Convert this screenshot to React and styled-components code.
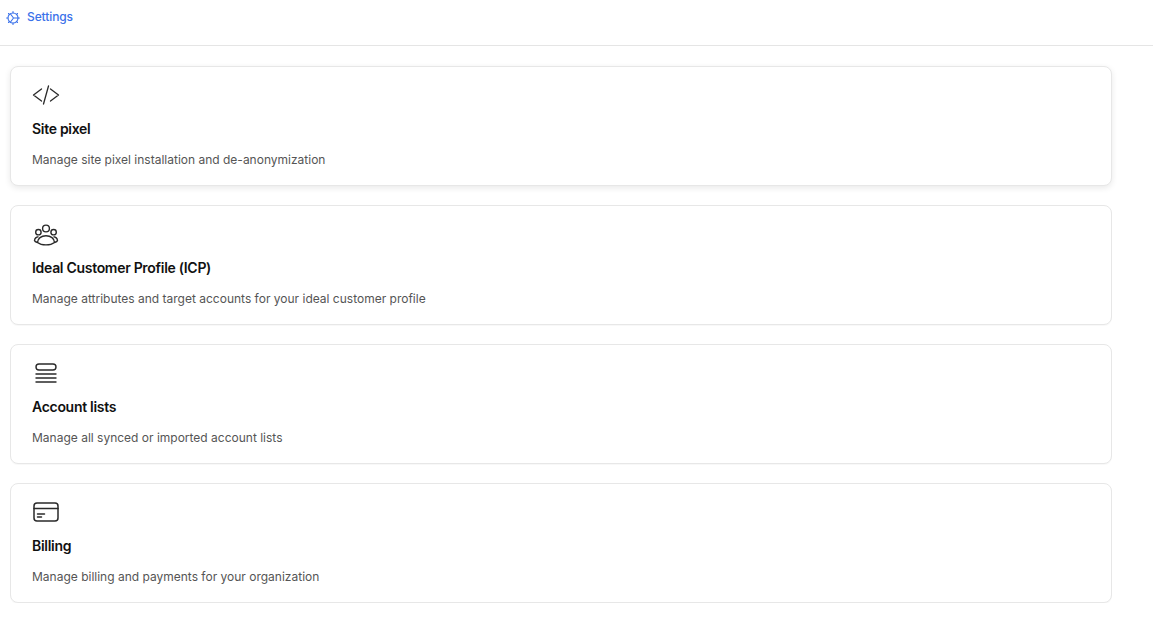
import React from 'react'
import styled, { createGlobalStyle } from 'styled-components'

const Global = createGlobalStyle`
  html, body {
    margin: 0;
    padding: 0;
    background: #fff;
    font-family: Inter, "Liberation Sans", sans-serif;
  }
`

const Header = styled.header`
  box-sizing: content-box;
  height: 35px;
  border-bottom: 1px solid #e5e5e5;
  display: flex;
  align-items: flex-start;
  gap: 7px;
  padding: 10px 0 0 6px;
  color: #3b72ea;
`

const Crumb = styled.span`
  font-size: 12px;
  font-weight: 500;
  line-height: 14px;
  letter-spacing: -.1px;
`

const CardList = styled.main`
  display: flex;
  flex-direction: column;
  gap: 19px;
  width: 1102px;
  margin: 20px 0 0 10px;
`

const Card = styled.section`
  box-sizing: border-box;
  height: 120px;
  padding: 14px 21px 0;
  border: 1px solid #e7e7e7;
  border-radius: 8px;
  background: #fff;
  box-shadow: ${({ $raised }) => ($raised ? '0 2px 6px rgba(0, 0, 0, .09)' : '0 1px 1px rgba(0, 0, 0, .03)')};
`

const IconSlot = styled.div`
  height: 28px;
  color: #2a2a2a;
  svg {
    display: block;
  }
`

const Title = styled.h2`
  margin: 12px 0 0;
  font-size: 14px;
  line-height: 16px;
  font-weight: 600;
  letter-spacing: -.3px;
  color: #111;
`

const Description = styled.p`
  margin: 15px 0 0;
  font-size: 12px;
  line-height: 16px;
  color: #555;
`

const GearIcon = () => (
  <svg width="14" height="14" viewBox="0 0 14 14" fill="none" stroke="currentColor" strokeWidth="1.100" strokeLinecap="round" style={{ marginTop: 1 }}>
    <circle cx="7" cy="7" r="5" />
    <path d="M7.500 7L4.500 3M7.500 7L4.500 11M7.500 7H12" />
    <path d="M7 .6v1.200M7 12.200v1.200M.6 7h1.200M12.200 7h1.200M2.500 2.500l.8.8M10.700 10.700l.8.8M2.500 11.500l.8-.8M10.700 3.300l.8-.8" />
  </svg>
)

const CodeIcon = () => (
  <svg width="28" height="28" viewBox="0 0 28 28" fill="none" stroke="currentColor" strokeWidth="1.300" strokeLinecap="round" strokeLinejoin="round">
    <path d="M9.500 8L1.500 14l8 6M18.500 8l8 6-8 6M16.500 5l-5 18" />
  </svg>
)

const UsersIcon = () => (
  <svg width="28" height="28" viewBox="0 0 28 28" fill="none" stroke="currentColor" strokeWidth="1.400">
    <circle cx="14" cy="8.500" r="3.400" />
    <circle cx="6.400" cy="12.200" r="2.700" />
    <circle cx="21.600" cy="12.200" r="2.700" />
    <path d="M5.500 22.500c0-4 3.800-6.800 8.500-6.800s8.500 2.800 8.500 6.800c-2 1.600-5 2.400-8.500 2.400S7.500 24.100 5.500 22.500z" />
    <path d="M5.500 22.500C3.800 22 2.700 21.300 2.500 20.500c.3-2 1.800-3.500 4-3.700M22.500 22.500c1.700-.5 2.800-1.200 3-2-.3-2-1.800-3.500-4-3.700" />
  </svg>
)

const ListIcon = () => (
  <svg width="28" height="28" viewBox="0 0 28 28" fill="none" stroke="currentColor" strokeWidth="1.400" strokeLinecap="round">
    <rect x="4" y="5" width="20" height="6" rx="3" />
    <path d="M4 15h20M4 19h20M4 23h20" />
  </svg>
)

const CardIcon = () => (
  <svg width="28" height="28" viewBox="0 0 28 28" fill="none" stroke="currentColor" strokeWidth="1.500" strokeLinecap="round">
    <rect x="2" y="5" width="24" height="18" rx="3" />
    <path d="M2 10.500h24" />
    <path d="M5.500 16h7M5.500 19h4" />
  </svg>
)

const settings = [
  { icon: CodeIcon, title: 'Site pixel', text: 'Manage site pixel installation and de-anonymization', raised: true },
  { icon: UsersIcon, title: 'Ideal Customer Profile (ICP)', text: 'Manage attributes and target accounts for your ideal customer profile' },
  { icon: ListIcon, title: 'Account lists', text: 'Manage all synced or imported account lists' },
  { icon: CardIcon, title: 'Billing', text: 'Manage billing and payments for your organization' },
]

const App = () => (
  <>
    <Global />
    <Header>
      <GearIcon />
      <Crumb>Settings</Crumb>
    </Header>
    <CardList>
      {settings.map(({ icon: Icon, title, text, raised }) => (
        <Card key={title} $raised={raised}>
          <IconSlot><Icon /></IconSlot>
          <Title>{title}</Title>
          <Description>{text}</Description>
        </Card>
      ))}
    </CardList>
  </>
)

export default App
